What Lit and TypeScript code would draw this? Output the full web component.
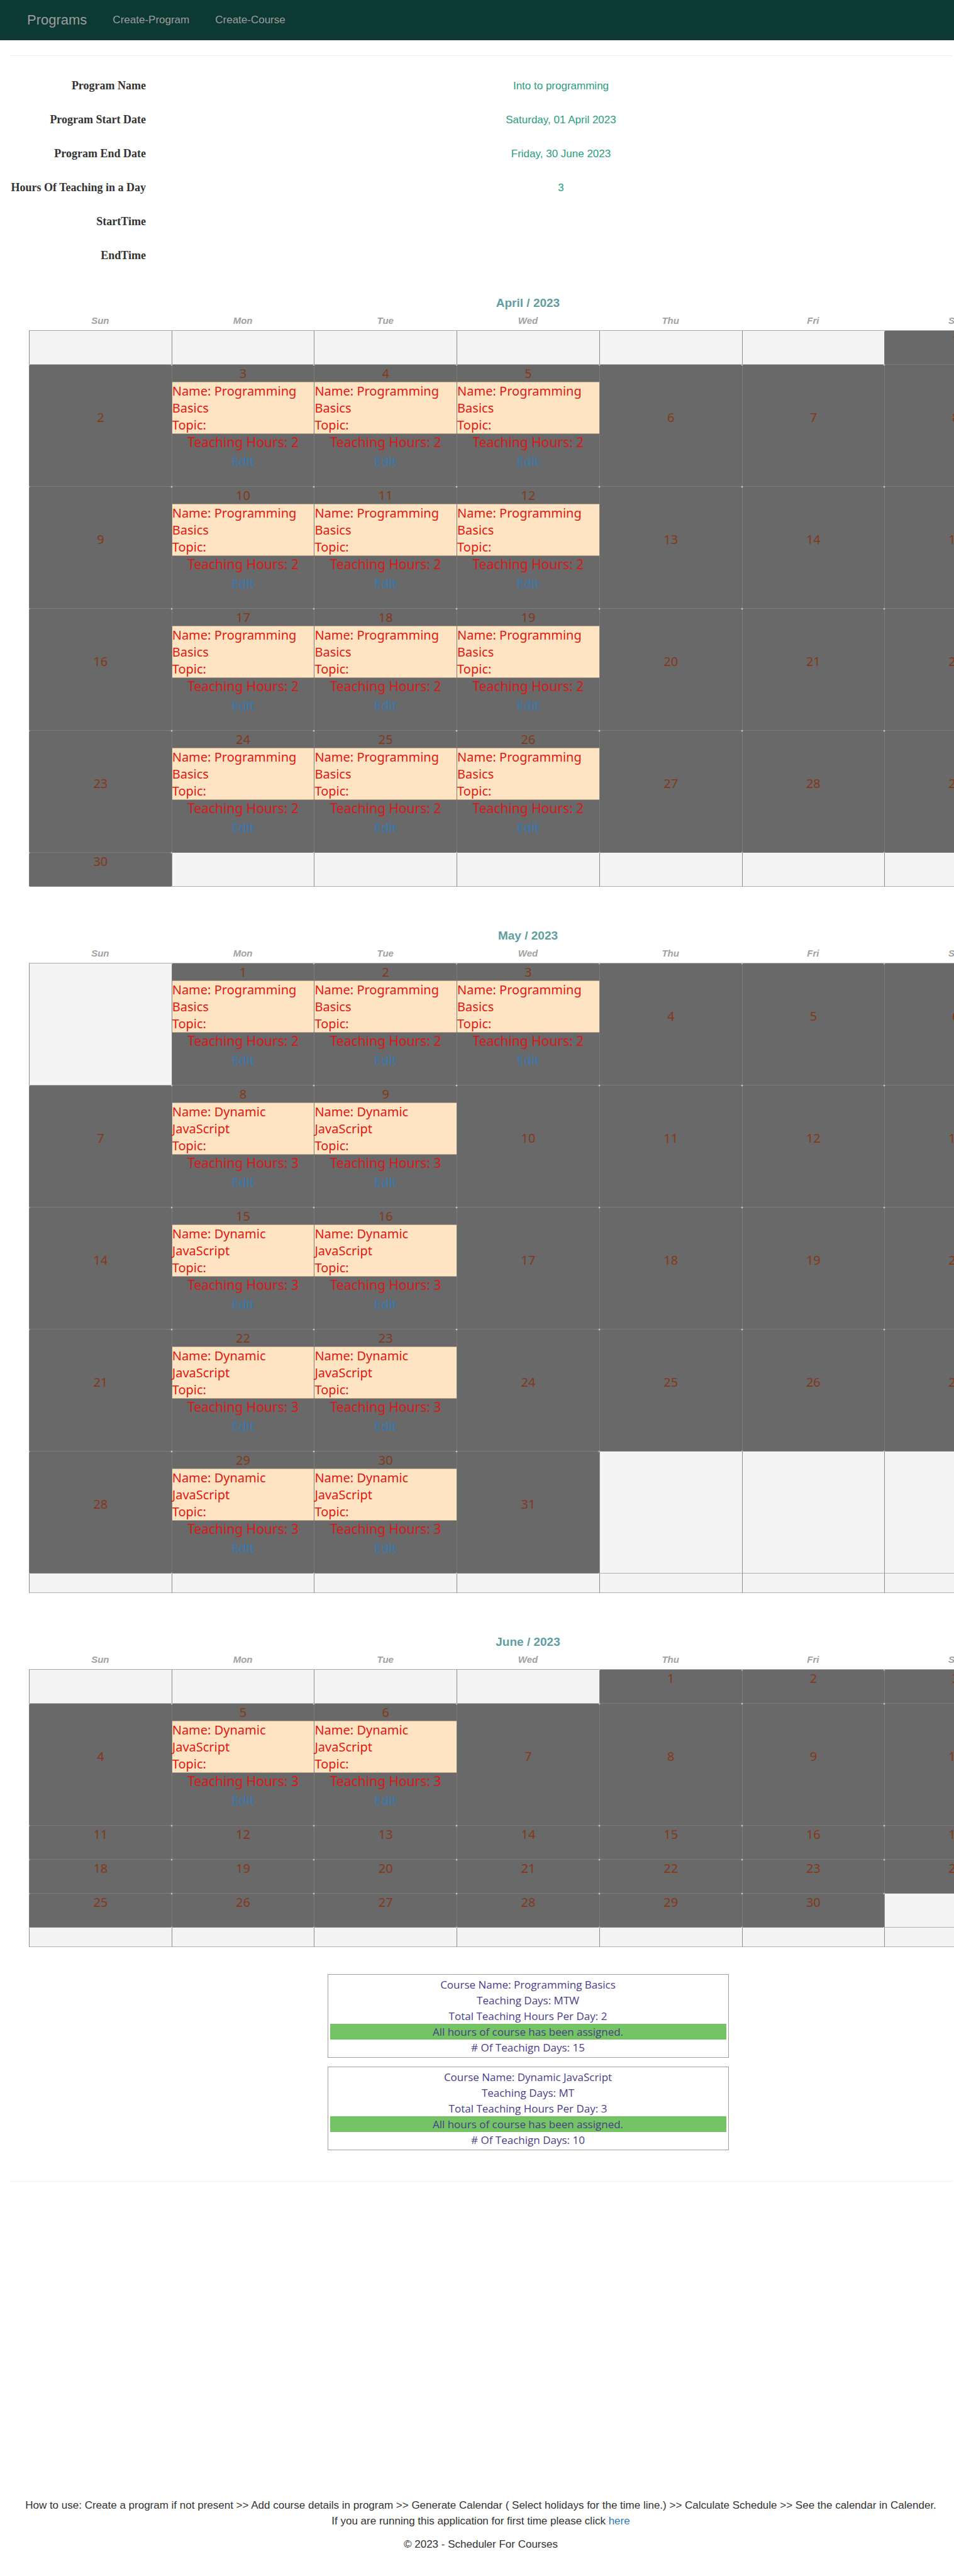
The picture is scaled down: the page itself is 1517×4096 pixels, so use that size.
import { LitElement, html, css, nothing } from "lit";
import { customElement, property } from "lit/decorators.js";

interface Course {
  name: string;
  days: string;
  hours: number;
  total: number;
}

interface Month {
  title: string;
  firstWeekday: number;
  length: number;
  lessons: Map<number, Course>;
}

const basics: Course = { name: "Programming Basics", days: "MTW", hours: 2, total: 15 };
const script: Course = { name: "Dynamic JavaScript", days: "MT", hours: 3, total: 10 };

const lessons = (course: Course, dates: number[]): [number, Course][] =>
  dates.map((d) => [d, course]);

const months: Month[] = [
  {
    title: "April / 2023",
    firstWeekday: 6,
    length: 30,
    lessons: new Map(lessons(basics, [3, 4, 5, 10, 11, 12, 17, 18, 19, 24, 25, 26])),
  },
  {
    title: "May / 2023",
    firstWeekday: 1,
    length: 31,
    lessons: new Map([
      ...lessons(basics, [1, 2, 3]),
      ...lessons(script, [8, 9, 15, 16, 22, 23, 29, 30]),
    ]),
  },
  {
    title: "June / 2023",
    firstWeekday: 4,
    length: 30,
    lessons: new Map(lessons(script, [5, 6])),
  },
];

const weekdays = ["Sun", "Mon", "Tue", "Wed", "Thu", "Fri", "Sat"];

@customElement("month-calendar")
export class MonthCalendar extends LitElement {
  @property({ attribute: false }) month!: Month;

  static styles = css`
    :host {
      display: block;
    }
    .month {
      width: 100%;
      table-layout: fixed;
      border-spacing: 0;
      font: 20px/27px "Noto Sans", sans-serif;
      text-align: center;
    }
    .title {
      font: bold 19px/27px "Liberation Sans", sans-serif;
      color: #5f9ea0;
    }
    .weekday {
      padding: 0;
      height: 30px;
      border-bottom: 1px solid #a9a9a9;
      font: italic bold 15px/30px "Liberation Sans", sans-serif;
      color: #a0a3a0;
    }
    .cell {
      padding: 0;
      height: 30px;
      vertical-align: middle;
      background: #f4f4f4;
      border-left: 1px solid #8c8c8c;
      border-bottom: 1px solid #b0b0b0;
    }
    .cell:last-child {
      border-right: 1px solid #9c9c9c;
    }
    .day {
      background: #696969;
      border-left-color: #7c7c7c;
      border-bottom-color: #7c7c7c;
      border-radius: 2px;
      color: #84381a;
    }
    .content {
      padding-bottom: 26px;
    }
    .lesson {
      border: solid #b9a68c;
      border-width: 1px 0;
      background: #ffe4c4;
      color: #e3170f;
      text-align: left;
    }
    .hours {
      font-size: 21px;
      color: #da1717;
    }
    .edit {
      display: block;
      margin-top: 3px;
      color: #337ab7;
      text-decoration: none;
    }
  `;

  private cell(date: number) {
    const { length, lessons } = this.month;
    if (date < 1 || date > length) return html`<td class="cell"></td>`;
    const course = lessons.get(date);
    return html`<td class="cell day">
      <div class="content">
        <div>${date}</div>
        ${course
          ? html`<div class="lesson">
                <div>Name: ${course.name}</div>
                <div>Topic:</div>
              </div>
              <div class="hours">Teaching Hours: ${course.hours}</div>
              <a class="edit" href="#edit">Edit</a>`
          : nothing}
      </div>
    </td>`;
  }

  render() {
    const { title, firstWeekday } = this.month;
    return html`<table class="month">
      <caption class="title">${title}</caption>
      <thead>
        <tr>
          ${weekdays.map((d) => html`<th class="weekday" scope="col">${d}</th>`)}
        </tr>
      </thead>
      <tbody>
        ${[0, 1, 2, 3, 4, 5].map(
          (week) => html`<tr>
            ${weekdays.map((_, i) => this.cell(week * 7 + i + 1 - firstWeekday))}
          </tr>`
        )}
      </tbody>
    </table>`;
  }
}

@customElement("course-card")
export class CourseCard extends LitElement {
  @property({ attribute: false }) course!: Course;

  static styles = css`
    :host {
      display: block;
      padding: 3px;
      border: 1px solid #a0a0a0;
      font: 17px/25px "Open Sans", sans-serif;
      color: #483d8b;
      text-align: center;
    }
    .done {
      background: #74c365;
    }
  `;

  render() {
    const c = this.course;
    return html`
      <div>Course Name: ${c.name}</div>
      <div>Teaching Days: ${c.days}</div>
      <div>Total Teaching Hours Per Day: ${c.hours}</div>
      <div class="done">All hours of course has been assigned.</div>
      <div># Of Teachign Days: ${c.total}</div>
    `;
  }
}

@customElement("app-root")
export class AppRoot extends LitElement {
  static styles = css`
    :host {
      display: block;
      overflow: hidden;
      background: #fff;
      font: 17px/25px "Liberation Sans", sans-serif;
      color: #333;
    }
    .nav {
      display: flex;
      align-items: center;
      gap: 41px;
      height: 63px;
      padding-left: 43px;
      background: #0c3934;
      border-bottom: 1px solid #1c2f2c;
    }
    .link {
      color: #9d9d9d;
      text-decoration: none;
    }
    .brand {
      font-size: 22px;
    }
    .body {
      padding: 0 3px 38px 15px;
    }
    .rule {
      height: 1px;
      margin: 0;
      border: 0;
      background: #eee;
    }
    .rule.top {
      margin-top: 24px;
    }
    .facts {
      display: grid;
      grid-template-columns: 217px 1fr;
      gap: 29px 35px;
      margin: 35px -3px 49px 0;
    }
    .term {
      font: bold 18px/25px "Liberation Serif", serif;
      text-align: right;
    }
    .value {
      margin: 0;
      color: #2a9d7f;
      text-align: center;
    }
    .schedule {
      display: flex;
      flex-direction: column;
      gap: 64px;
      margin: 0 -119px 0 31px;
    }
    .courses {
      display: flex;
      flex-direction: column;
      gap: 14px;
      width: 100%;
      max-width: 638px;
      margin: -21px auto 49px;
    }
    .footer {
      margin-top: 502px;
      text-align: center;
    }
    .line {
      margin: 0 0 12px;
    }
    .copy {
      margin: 0;
    }
    .here {
      color: #337ab7;
      text-decoration: none;
    }
  `;

  private facts = [
    ["Program Name", "Into to programming"],
    ["Program Start Date", "Saturday, 01 April 2023"],
    ["Program End Date", "Friday, 30 June 2023"],
    ["Hours Of Teaching in a Day", "3"],
    ["StartTime", ""],
    ["EndTime", ""],
  ];

  render() {
    return html`
      <nav class="nav">
        <a class="link brand" href="#programs">Programs</a>
        <a class="link" href="#create-program">Create-Program</a>
        <a class="link" href="#create-course">Create-Course</a>
      </nav>
      <main class="body">
        <hr class="rule top" />
        <dl class="facts">
          ${this.facts.map(
            ([term, value]) => html`<dt class="term">${term}</dt>
              <dd class="value">${value}</dd>`
          )}
        </dl>
        <div class="schedule">
          ${months.map((m) => html`<month-calendar .month=${m}></month-calendar>`)}
          <div class="courses">
            ${[basics, script].map((c) => html`<course-card .course=${c}></course-card>`)}
          </div>
        </div>
        <hr class="rule" />
        <footer class="footer">
          <p class="line">
            How to use: Create a program if not present &gt;&gt; Add course details in program
            &gt;&gt; Generate Calendar ( Select holidays for the time line.) &gt;&gt; Calculate
            Schedule &gt;&gt; See the calendar in Calender.<br />
            If you are running this application for first time please click
            <a class="here" href="#here">here</a>
          </p>
          <p class="copy">© 2023 - Scheduler For Courses</p>
        </footer>
      </main>
    `;
  }
}
